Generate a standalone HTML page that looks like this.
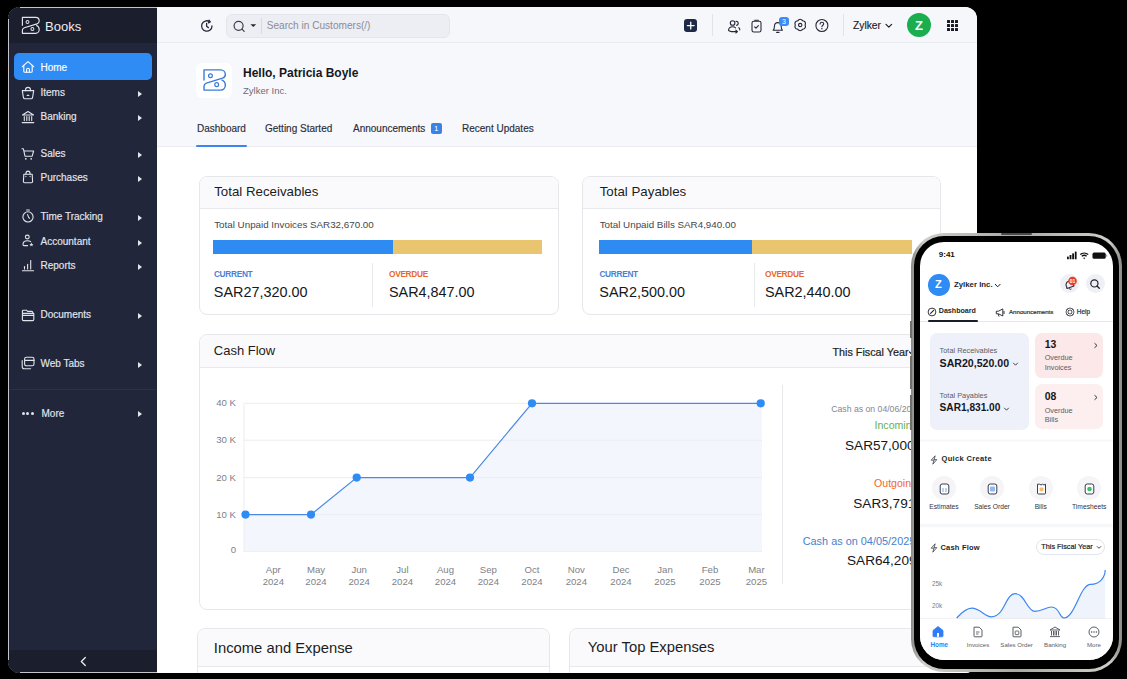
<!DOCTYPE html>
<html><head><meta charset="utf-8"><style>*{margin:0;padding:0;box-sizing:border-box}
html,body{width:1127px;height:679px;background:#000;overflow:hidden;font-family:"Liberation Sans",sans-serif;position:relative}
.a{position:absolute;white-space:nowrap}
#win{position:absolute;left:0;top:0;width:1127px;height:679px;clip-path:inset(7px 150px 6px 8px round 12px);background:#fff}
.arr{position:absolute;left:138px;width:0;height:0;border-top:3.5px solid transparent;border-bottom:3.5px solid transparent;border-left:4px solid #e4e6ee}
.card{position:absolute;border:1px solid #e6e7eb;border-radius:8px;background:#fff;overflow:hidden}
.ch{position:absolute;left:0;top:0;right:0;background:#fafafc;border-bottom:1px solid #e9e9ed}
</style></head><body>
<div id="win">
<div class="a" style="left:8px;top:7px;width:149px;height:666px;background:#21263a"></div>
<div class="a" style="left:8px;top:7px;width:149px;height:36px;background:#1b1e2d"></div>
<div class="a" style="left:8px;top:650px;width:149px;height:23px;background:#1b1e2d"></div>
<div class="a" style="left:8px;top:389px;width:149px;height:1px;background:#2c3146"></div>
<div class="a" style="left:45px;top:20.30px;font-size:13px;line-height:13px;color:#eceef4;">Books</div>
<div class="a" style="left:14px;top:53px;width:138px;height:27px;background:#2f8cf4;border-radius:5px"></div>
<div class="a" style="left:40.5px;top:63.14px;font-size:10px;line-height:10px;color:#ffffff;-webkit-text-stroke:0.15px currentColor;">Home</div>
<div class="a" style="left:40.5px;top:87.94px;font-size:10px;line-height:10px;color:#e4e6ee;-webkit-text-stroke:0.15px currentColor;">Items</div>
<div class="arr" style="top:90.5px"></div>
<div class="a" style="left:40.5px;top:112.23px;font-size:10px;line-height:10px;color:#e4e6ee;-webkit-text-stroke:0.15px currentColor;">Banking</div>
<div class="arr" style="top:114.8px"></div>
<div class="a" style="left:40.5px;top:149.13px;font-size:10px;line-height:10px;color:#e4e6ee;-webkit-text-stroke:0.15px currentColor;">Sales</div>
<div class="arr" style="top:151.7px"></div>
<div class="a" style="left:40.5px;top:173.43px;font-size:10px;line-height:10px;color:#e4e6ee;-webkit-text-stroke:0.15px currentColor;">Purchases</div>
<div class="arr" style="top:176.0px"></div>
<div class="a" style="left:40.5px;top:212.33px;font-size:10px;line-height:10px;color:#e4e6ee;-webkit-text-stroke:0.15px currentColor;">Time Tracking</div>
<div class="arr" style="top:214.9px"></div>
<div class="a" style="left:40.5px;top:237.03px;font-size:10px;line-height:10px;color:#e4e6ee;-webkit-text-stroke:0.15px currentColor;">Accountant</div>
<div class="arr" style="top:239.6px"></div>
<div class="a" style="left:40.5px;top:261.34px;font-size:10px;line-height:10px;color:#e4e6ee;-webkit-text-stroke:0.15px currentColor;">Reports</div>
<div class="arr" style="top:263.9px"></div>
<div class="a" style="left:40.5px;top:310.44px;font-size:10px;line-height:10px;color:#e4e6ee;-webkit-text-stroke:0.15px currentColor;">Documents</div>
<div class="arr" style="top:313.0px"></div>
<div class="a" style="left:40.5px;top:359.44px;font-size:10px;line-height:10px;color:#e4e6ee;-webkit-text-stroke:0.15px currentColor;">Web Tabs</div>
<div class="arr" style="top:362.0px"></div>
<div class="a" style="left:41.5px;top:408.54px;font-size:10px;line-height:10px;color:#e4e6ee;-webkit-text-stroke:0.15px currentColor;">More</div>
<div class="arr" style="top:411.1px"></div>
<div class="a" style="left:157px;top:7px;width:820px;height:36px;background:#f6f7fb;border-bottom:1px solid #ebebef"></div>
<div class="a" style="left:157px;top:43px;width:820px;height:104px;background:#f7f8fc;border-bottom:1px solid #ececf0"></div>
<div class="a" style="left:226px;top:14px;width:224px;height:24px;background:#ededf4;border:1px solid #e4e4eb;border-radius:6px"></div>
<div class="a" style="left:261px;top:17.5px;width:1px;height:16px;background:#d9d9e0"></div>
<div class="a" style="left:266.7px;top:20.55px;font-size:10.1px;line-height:10.1px;color:#8a8c96;">Search in Customers(/)</div>
<div class="a" style="left:196px;top:63px;width:36px;height:35px;background:#fff;border-radius:6px"></div>
<div class="a" style="left:243px;top:66.54px;font-size:12px;line-height:12px;color:#16171c;font-weight:bold;">Hello, Patricia Boyle</div>
<div class="a" style="left:243px;top:85.76px;font-size:9.5px;line-height:9.5px;color:#6b6d76;">Zylker Inc.</div>
<div class="a" style="left:197px;top:124.23px;font-size:10px;line-height:10px;color:#2a2d3a;-webkit-text-stroke:0.15px currentColor;">Dashboard</div>
<div class="a" style="left:265px;top:124.23px;font-size:10px;line-height:10px;color:#2a2d3a;-webkit-text-stroke:0.15px currentColor;">Getting Started</div>
<div class="a" style="left:353px;top:124.23px;font-size:10px;line-height:10px;color:#2a2d3a;-webkit-text-stroke:0.15px currentColor;">Announcements</div>
<div class="a" style="left:462px;top:124.23px;font-size:10px;line-height:10px;color:#2a2d3a;-webkit-text-stroke:0.15px currentColor;">Recent Updates</div>
<div class="a" style="left:430.7px;top:123.4px;width:11px;height:11px;background:#3b82e6;border-radius:2px;color:#fff;font-size:8px;line-height:11px;text-align:center">1</div>
<div class="a" style="left:196px;top:144.5px;width:51px;height:2.2px;background:#3d84f0;border-radius:1px"></div>
<div class="card" style="left:198.5px;top:175.5px;width:360.5px;height:139px"><div class="ch" style="height:32px"></div></div>
<div class="a" style="left:214.2px;top:184.74px;font-size:13.3px;line-height:13.3px;color:#1c1d22;">Total Receivables</div>
<div class="a" style="left:214.2px;top:219.60px;font-size:9.8px;line-height:9.8px;color:#45474f;">Total Unpaid Invoices SAR32,670.00</div>
<div class="a" style="left:213.39999999999998px;top:240px;width:179.90000000000003px;height:14px;background:#2e8bf2"></div>
<div class="a" style="left:393.3px;top:240px;width:148.7px;height:14px;background:#e8c56e"></div>
<div class="a" style="left:371.5px;top:263px;width:1px;height:44px;background:#e8e9ed"></div>
<div class="a" style="left:213.89999999999998px;top:270.47px;font-size:8.3px;line-height:8.3px;color:#4a80d4;font-weight:bold;letter-spacing:-0.3px;">CURRENT</div>
<div class="a" style="left:389px;top:270.47px;font-size:8.3px;line-height:8.3px;color:#e8692c;font-weight:bold;letter-spacing:-0.3px;">OVERDUE</div>
<div class="a" style="left:213.79999999999998px;top:284.51px;font-size:14.4px;line-height:14.4px;color:#16171c;">SAR27,320.00</div>
<div class="a" style="left:389px;top:284.51px;font-size:14.4px;line-height:14.4px;color:#16171c;">SAR4,847.00</div>
<div class="card" style="left:581.5px;top:175.5px;width:359.5px;height:139px"><div class="ch" style="height:32px"></div></div>
<div class="a" style="left:599.7px;top:184.74px;font-size:13.3px;line-height:13.3px;color:#1c1d22;">Total Payables</div>
<div class="a" style="left:599.7px;top:219.60px;font-size:9.8px;line-height:9.8px;color:#45474f;">Total Unpaid Bills SAR4,940.00</div>
<div class="a" style="left:598.9000000000001px;top:240px;width:153.39999999999986px;height:14px;background:#2e8bf2"></div>
<div class="a" style="left:752.3px;top:240px;width:159.70000000000005px;height:14px;background:#e8c56e"></div>
<div class="a" style="left:754.3px;top:263px;width:1px;height:44px;background:#e8e9ed"></div>
<div class="a" style="left:599.4000000000001px;top:270.47px;font-size:8.3px;line-height:8.3px;color:#4a80d4;font-weight:bold;letter-spacing:-0.3px;">CURRENT</div>
<div class="a" style="left:765px;top:270.47px;font-size:8.3px;line-height:8.3px;color:#e8692c;font-weight:bold;letter-spacing:-0.3px;">OVERDUE</div>
<div class="a" style="left:599.3000000000001px;top:284.51px;font-size:14.4px;line-height:14.4px;color:#16171c;">SAR2,500.00</div>
<div class="a" style="left:765px;top:284.51px;font-size:14.4px;line-height:14.4px;color:#16171c;">SAR2,440.00</div>
<div class="card" style="left:198.5px;top:334px;width:742px;height:276px"><div class="ch" style="height:32.5px"></div></div>
<div class="a" style="left:213.8px;top:343.90px;font-size:13px;line-height:13px;color:#1c1d22;">Cash Flow</div>
<svg class="a" style="left:907.5px;top:350px" width="9" height="7" viewBox="0 0 9 7"><path d="M1.5,2 L4.5,5 L7.5,2" fill="none" stroke="#1c1d22" stroke-width="1.2" stroke-linecap="round"/></svg>
<div class="a" style="left:832.4px;top:347.46px;font-size:10.8px;line-height:10.8px;color:#1c1d22;-webkit-text-stroke:0.2px currentColor;">This Fiscal Year</div>
<svg class="a" style="left:0;top:0" width="1127" height="679" viewBox="0 0 1127 679">
<path d="M244,514.6 L245.5,514.6 L311,514.6 L356.7,477.6 L470,477.6 L532,403.3 L760.7,403.3 L762,403.3 L762,551.6 L244,551.6 Z" fill="#f3f6fd"/><line x1="244" y1="403.3" x2="762" y2="403.3" stroke="#ededf1" stroke-width="1"/><line x1="244" y1="440.2" x2="762" y2="440.2" stroke="#ededf1" stroke-width="1"/><line x1="244" y1="477.6" x2="762" y2="477.6" stroke="#ededf1" stroke-width="1"/><line x1="244" y1="514.6" x2="762" y2="514.6" stroke="#ededf1" stroke-width="1"/>
<line x1="244" y1="551.6" x2="762" y2="551.6" stroke="#eeeef2" stroke-width="1"/>
<line x1="244" y1="403" x2="244" y2="552" stroke="#ededf1" stroke-width="1"/>
<path d="M245.5,514.6 L311,514.6 L356.7,477.6 L470,477.6 L532,403.3 L760.7,403.3" fill="none" stroke="#4a8ae6" stroke-width="1.2"/><circle cx="245.5" cy="514.6" r="4.1" fill="#2f8cf4"/><circle cx="311" cy="514.6" r="4.1" fill="#2f8cf4"/><circle cx="356.7" cy="477.6" r="4.1" fill="#2f8cf4"/><circle cx="470" cy="477.6" r="4.1" fill="#2f8cf4"/><circle cx="532" cy="403.3" r="4.1" fill="#2f8cf4"/><circle cx="760.7" cy="403.3" r="4.1" fill="#2f8cf4"/>
<g font-family="Liberation Sans" font-size="9.6" fill="#7d7f88"><text x="273.3" y="572.6" text-anchor="middle">Apr</text><text x="273.3" y="584.8" text-anchor="middle">2024</text><text x="316" y="572.6" text-anchor="middle">May</text><text x="316" y="584.8" text-anchor="middle">2024</text><text x="359.2" y="572.6" text-anchor="middle">Jun</text><text x="359.2" y="584.8" text-anchor="middle">2024</text><text x="402.4" y="572.6" text-anchor="middle">Jul</text><text x="402.4" y="584.8" text-anchor="middle">2024</text><text x="445.5" y="572.6" text-anchor="middle">Aug</text><text x="445.5" y="584.8" text-anchor="middle">2024</text><text x="488.3" y="572.6" text-anchor="middle">Sep</text><text x="488.3" y="584.8" text-anchor="middle">2024</text><text x="532" y="572.6" text-anchor="middle">Oct</text><text x="532" y="584.8" text-anchor="middle">2024</text><text x="576.3" y="572.6" text-anchor="middle">Nov</text><text x="576.3" y="584.8" text-anchor="middle">2024</text><text x="621" y="572.6" text-anchor="middle">Dec</text><text x="621" y="584.8" text-anchor="middle">2024</text><text x="665" y="572.6" text-anchor="middle">Jan</text><text x="665" y="584.8" text-anchor="middle">2025</text><text x="710" y="572.6" text-anchor="middle">Feb</text><text x="710" y="584.8" text-anchor="middle">2025</text><text x="756.4" y="572.6" text-anchor="middle">Mar</text><text x="756.4" y="584.8" text-anchor="middle">2025</text><text x="236" y="406.4" text-anchor="end">40 K</text><text x="236" y="443.3" text-anchor="end">30 K</text><text x="236" y="480.7" text-anchor="end">20 K</text><text x="236" y="517.8" text-anchor="end">10 K</text><text x="236" y="552.6" text-anchor="end">0</text></g></svg>
<div class="a" style="left:782px;top:385px;width:1px;height:199px;background:#e8e9ed"></div>
<div class="a" style="left:831.2px;top:405.34px;font-size:8.7px;line-height:8.7px;color:#85878e;">Cash as on 04/06/2025</div>
<div class="a" style="left:874.5px;top:419.63px;font-size:10.6px;line-height:10.6px;color:#6bb04a;">Incoming</div>
<div class="a" style="left:845px;top:438.79px;font-size:13.6px;line-height:13.6px;color:#16171c;">SAR57,000.00</div>
<div class="a" style="left:874px;top:478.33px;font-size:10.6px;line-height:10.6px;color:#f0682e;">Outgoing</div>
<div class="a" style="left:853.3px;top:496.59px;font-size:13.6px;line-height:13.6px;color:#16171c;">SAR3,791.00</div>
<div class="a" style="left:802.7px;top:536.17px;font-size:10.9px;line-height:10.9px;color:#4a80cc;">Cash as on 04/05/2025</div>
<div class="a" style="left:847px;top:554.49px;font-size:13.6px;line-height:13.6px;color:#16171c;">SAR64,209.00</div>
<div class="card" style="left:197px;top:628px;width:353px;height:80px"><div class="ch" style="height:37.6px"></div></div>
<div class="a" style="left:213.8px;top:640.67px;font-size:14.8px;line-height:14.8px;color:#1c1d22;">Income and Expense</div>
<div class="card" style="left:569px;top:628px;width:400px;height:80px"><div class="ch" style="height:37.6px"></div></div>
<div class="a" style="left:587.8px;top:639.67px;font-size:14.8px;line-height:14.8px;color:#1c1d22;">Your Top Expenses</div>
<svg class="a" style="left:19px;top:14px;overflow:visible" width="24" height="24" viewBox="0 0 24 24" ><path d="M3.4,11.8 V3.4 H16.6 C18.6,3.4 20.2,5 20.2,7 C20.2,8.4 19.4,9.4 18,9.9 L5.3,13.8 C4.2,14.2 3.4,15 3.4,16.2 V19.3 H16.6 C18.6,19.3 20.2,17.6 20.2,15.5 C20.2,13.3 18.8,11.8 17.2,11.2" fill="none" stroke="#e2e4ec" stroke-width="1.15" stroke-linejoin="round"/><circle cx="8.5" cy="8" r="1.45" fill="none" stroke="#e2e4ec" stroke-width="1.05"/><circle cx="13.4" cy="15" r="1.45" fill="none" stroke="#e2e4ec" stroke-width="1.05"/></svg>
<svg class="a" style="left:0;top:0" width="1127" height="679"><g transform="translate(199.68,65.58) scale(1.27)"><path d="M3.4,11.8 V3.4 H16.6 C18.6,3.4 20.2,5 20.2,7 C20.2,8.4 19.4,9.4 18,9.9 L5.3,13.8 C4.2,14.2 3.4,15 3.4,16.2 V19.3 H16.6 C18.6,19.3 20.2,17.6 20.2,15.5 C20.2,13.3 18.8,11.8 17.2,11.2" fill="none" stroke="#3b7bd6" stroke-width="1.1" stroke-linejoin="round"/><circle cx="8.5" cy="8" r="1.5" fill="none" stroke="#3b7bd6" stroke-width="0.95"/><circle cx="13.4" cy="15" r="1.5" fill="none" stroke="#3b7bd6" stroke-width="0.95"/></g></svg>
<svg class="a" style="left:21px;top:60px;overflow:visible" width="14" height="14" viewBox="0 0 14 14" ><g stroke="#fff" stroke-width="1.1" fill="none" stroke-linecap="round" stroke-linejoin="round"><path d="M1.3,6.6 L7,1.6 L12.7,6.6"/><path d="M2.8,5.4 V11.2 Q2.8,12.3 3.9,12.3 H10.1 Q11.2,12.3 11.2,11.2 V5.4"/><path d="M5.6,12.3 V9.6 Q5.6,8.2 7,8.2 Q8.4,8.2 8.4,9.6 V12.3"/></g></svg>
<svg class="a" style="left:21px;top:85.5px;overflow:visible" width="14" height="14" viewBox="0 0 14 14" ><g stroke="#e2e4ec" stroke-width="1.1" fill="none" stroke-linecap="round" stroke-linejoin="round"><path d="M4.6,4.6 V3.6 Q4.6,1.4 7,1.4 Q9.4,1.4 9.4,3.6 V4.6"/><path d="M1.3,4.6 H12.7 L11.6,11.4 Q11.4,12.8 10,12.8 H4 Q2.6,12.8 2.4,11.4 Z"/><path d="M6.2,9.4 H7.8"/></g></svg>
<svg class="a" style="left:21px;top:110px;overflow:visible" width="14" height="14" viewBox="0 0 14 14" ><g stroke="#e2e4ec" stroke-width="1.1" fill="none" stroke-linecap="round" stroke-linejoin="round"><path d="M1.5,5 L7,1.5 L12.5,5 Z"/><path d="M3.3,6.6 V10.6 M5.8,6.6 V10.6 M8.2,6.6 V10.6 M10.7,6.6 V10.6"/><path d="M1.2,12.6 H12.8"/></g></svg>
<svg class="a" style="left:21px;top:146.5px;overflow:visible" width="14" height="14" viewBox="0 0 14 14" ><g stroke="#e2e4ec" stroke-width="1.1" fill="none" stroke-linecap="round" stroke-linejoin="round"><path d="M1,1.8 H2.4 L4,9.2 H11.2 L12.6,4 H3"/></g><circle cx="4.8" cy="11.8" r="0.9" fill="#e2e4ec"/><circle cx="10.2" cy="11.8" r="0.9" fill="#e2e4ec"/></svg>
<svg class="a" style="left:21px;top:170px;overflow:visible" width="14" height="14" viewBox="0 0 14 14" ><g stroke="#e2e4ec" stroke-width="1.1" fill="none" stroke-linecap="round" stroke-linejoin="round"><path d="M5,4.3 V3.2 Q5,1.1 7,1.1 Q9,1.1 9,3.2 V4.3"/><path d="M2.8,4.3 H11.2 L11.6,11.6 Q11.6,12.8 10.4,12.8 H3.6 Q2.4,12.8 2.4,11.6 Z"/><path d="M4.9,6.2 L4.9,6.6 M9.1,6.2 V6.6"/></g></svg>
<svg class="a" style="left:21px;top:209px;overflow:visible" width="14" height="14" viewBox="0 0 14 14" ><g stroke="#e2e4ec" stroke-width="1.1" fill="none" stroke-linecap="round" stroke-linejoin="round"><circle cx="7" cy="7.9" r="5.1"/><path d="M5.6,1 H8.4"/><path d="M6.6,5.6 L7.6,8.4 L8.6,9.2"/></g></svg>
<svg class="a" style="left:21px;top:234px;overflow:visible" width="14" height="14" viewBox="0 0 14 14" ><g stroke="#e2e4ec" stroke-width="1.1" fill="none" stroke-linecap="round" stroke-linejoin="round"><circle cx="6.3" cy="3" r="1.9"/><path d="M9.6,7.6 Q8.6,6.8 6.3,6.8 Q2.2,6.8 2,10.4 Q2,11.6 3,11.6 H6.6"/></g><path d="M10.4,8.6 L11,10 L12.4,10.1 L11.3,11 L11.7,12.4 L10.4,11.6 L9.1,12.4 L9.5,11 L8.4,10.1 L9.8,10 Z" fill="#e2e4ec"/></svg>
<svg class="a" style="left:21px;top:258px;overflow:visible" width="14" height="14" viewBox="0 0 14 14" ><g stroke="#e2e4ec" stroke-width="1.1" fill="none" stroke-linecap="round" stroke-linejoin="round"><path d="M3.5,8.6 V11"/><path d="M6.6,6.2 V11"/><path d="M9.7,2.6 V11"/><path d="M1.4,12.8 H12.6"/></g></svg>
<svg class="a" style="left:21px;top:307.5px;overflow:visible" width="14" height="14" viewBox="0 0 14 14" ><g stroke="#e2e4ec" stroke-width="1.1" fill="none" stroke-linecap="round" stroke-linejoin="round"><path d="M1.4,4.6 V3.4 Q1.4,2.2 2.6,2.2 H5.4 L6.6,3.4 H10.6 Q11.8,3.4 11.8,4.6"/><path d="M1.4,5.4 H12.4 Q12.8,5.4 12.8,5.8 V11.4 Q12.8,12.6 11.6,12.6 H2.6 Q1.4,12.6 1.4,11.4 Z"/><path d="M1.6,7.4 H12.6"/></g></svg>
<svg class="a" style="left:21px;top:356px;overflow:visible" width="14" height="14" viewBox="0 0 14 14" ><g stroke="#e2e4ec" stroke-width="1.1" fill="none" stroke-linecap="round" stroke-linejoin="round"><rect x="3.6" y="1.2" width="9.4" height="8.6" rx="1.8"/><path d="M3.6,4.4 H13"/><path d="M1.2,4.6 V10.8 Q1.2,12.8 3.2,12.8 H9.6"/></g></svg>
<div class="a" style="left:22.05px;top:412.05px;width:3.1px;height:3.1px;border-radius:50%;background:#e2e4ec"></div>
<div class="a" style="left:26.349999999999998px;top:412.05px;width:3.1px;height:3.1px;border-radius:50%;background:#e2e4ec"></div>
<div class="a" style="left:30.650000000000002px;top:412.05px;width:3.1px;height:3.1px;border-radius:50%;background:#e2e4ec"></div>
<svg class="a" style="left:79px;top:656px;overflow:visible" width="9" height="11" viewBox="0 0 9 11" ><path d="M6.3,1.5 L2.3,5.5 L6.3,9.5" fill="none" stroke="#e8eaf0" stroke-width="1.3" stroke-linecap="round" stroke-linejoin="round"/></svg>
<svg class="a" style="left:200px;top:19px;overflow:visible" width="14" height="14" viewBox="0 0 14 14" ><g stroke="#262938" stroke-width="1.3" fill="none" stroke-linecap="round" stroke-linejoin="round"><path d="M12,7 A5.2,5.2 0 1 1 9.6,2.6"/><path d="M9,1.2 L10.2,2.9 L8.4,3.9"/><path d="M6.6,4.4 V7.3 L8.4,8.6"/></g></svg>
<svg class="a" style="left:232px;top:19px;overflow:visible" width="14" height="14" viewBox="0 0 14 14" ><g stroke="#3a3c48" stroke-width="1.2" fill="none" stroke-linecap="round"><circle cx="6.6" cy="6.8" r="4.5"/><path d="M10,10.2 L12.2,12.4"/></g></svg>
<svg class="a" style="left:249px;top:22px;overflow:visible" width="9" height="6" viewBox="0 0 9 6" ><path d="M1.4,2.2 L7.2,2.2 L4.3,5 Z" fill="#262938"/></svg>
<div class="a" style="left:683.8px;top:18.8px;width:13.5px;height:13.1px;border-radius:3px;background:#1e2a45"></div>
<svg class="a" style="left:683.8px;top:18.8px;overflow:visible" width="13.5" height="13.1" viewBox="0 0 13.5 13.1" ><path d="M6.75,3.2 V9.9 M3.4,6.55 H10.1" stroke="#fff" stroke-width="1.3" stroke-linecap="round"/></svg>
<div class="a" style="left:712.2px;top:14px;width:1px;height:22px;background:#e2e3e8"></div>
<div class="a" style="left:842.8px;top:14.3px;width:1px;height:22px;background:#e2e3e8"></div>
<svg class="a" style="left:727px;top:18.5px;overflow:visible" width="15" height="15" viewBox="0 0 15 15" ><g stroke="#262938" stroke-width="1.1" fill="none" stroke-linecap="round" stroke-linejoin="round"><circle cx="5.6" cy="4" r="2.3"/><path d="M9,2.2 Q11.3,2.4 11.2,4.6 Q11,6 9.6,6.4"/><path d="M1.6,11.2 Q1.8,7.8 5.6,7.8 Q7.6,7.8 8.6,8.8"/><path d="M1.6,11.2 Q2.2,12.6 6.4,12.6 H10"/><path d="M8.8,11.2 L10.4,12.6 L8.8,14"/><path d="M11.8,8.6 Q13,9.6 12.8,11"/></g></svg>
<svg class="a" style="left:749.5px;top:18.5px;overflow:visible" width="13" height="14" viewBox="0 0 13 14" ><g stroke="#262938" stroke-width="1.1" fill="none" stroke-linecap="round" stroke-linejoin="round"><rect x="2" y="2.2" width="9" height="10.8" rx="1.8"/><path d="M4.6,1.2 H8.4"/><path d="M4.6,7.8 L6,9.2 L8.4,6.6"/></g></svg>
<svg class="a" style="left:771px;top:20px;overflow:visible" width="14" height="14" viewBox="0 0 14 14" ><g stroke="#262938" stroke-width="1.1" fill="none" stroke-linecap="round" stroke-linejoin="round"><path d="M2.2,10.2 Q3.4,9 3.4,6.6 Q3.4,2.6 6.8,2.6 Q10.2,2.6 10.2,6.6 Q10.2,9 11.4,10.2 Z"/><path d="M5.6,12.4 H8"/></g></svg>
<div class="a" style="left:779.3px;top:17px;width:9.3px;height:9.3px;border-radius:3px;background:#3d8af7;color:#fff;font-size:7px;line-height:9.3px;text-align:center">3</div>
<svg class="a" style="left:793.5px;top:19.2px;overflow:visible" width="13" height="13" viewBox="0 0 13 13" ><g stroke="#262938" stroke-width="1.15" fill="none" stroke-linejoin="round"><path d="M4.93,0.63 Q6.20,-0.10 7.47,0.63 Q8.47,2.07 10.21,2.22 Q11.48,2.95 11.48,4.41 Q10.74,6.00 11.48,7.59 Q11.48,9.05 10.21,9.78 Q8.47,9.93 7.47,11.37 Q6.20,12.10 4.93,11.37 Q3.93,9.93 2.19,9.78 Q0.92,9.05 0.92,7.59 Q1.66,6.00 0.92,4.41 Q0.92,2.95 2.19,2.22 Q3.93,2.07 4.93,0.63 Z"/><circle cx="6.2" cy="6" r="1.7"/></g></svg>
<svg class="a" style="left:814.5px;top:19px;overflow:visible" width="14" height="14" viewBox="0 0 14 14" ><g stroke="#262938" stroke-width="1.1" fill="none" stroke-linecap="round"><circle cx="6.9" cy="6.5" r="6"/><path d="M5.1,5 Q5.1,3.2 6.9,3.2 Q8.7,3.2 8.7,4.8 Q8.7,5.8 7.6,6.4 Q6.9,6.8 6.9,7.8"/></g><circle cx="6.9" cy="9.8" r="0.75" fill="#262938"/></svg>
<div class="a" style="left:853px;top:21.22px;font-size:10.25px;line-height:10.25px;color:#1f2029;-webkit-text-stroke:0.15px currentColor;">Zylker</div>
<svg class="a" style="left:884.5px;top:23px;overflow:visible" width="8" height="6" viewBox="0 0 8 6" ><path d="M1,1.4 L3.8,4.2 L6.6,1.4" fill="none" stroke="#1f2029" stroke-width="1.2" stroke-linecap="round" stroke-linejoin="round"/></svg>
<div class="a" style="left:907.2px;top:13.3px;width:24px;height:24px;border-radius:50%;background:#1aae4f"></div>
<div class="a" style="left:915px;top:18.90px;font-size:13px;line-height:13px;color:#fff;font-weight:bold;">Z</div>
<div class="a" style="left:947.40px;top:20.20px;width:2.7px;height:2.7px;border-radius:0.6px;background:#1a1c26"></div>
<div class="a" style="left:951.35px;top:20.20px;width:2.7px;height:2.7px;border-radius:0.6px;background:#1a1c26"></div>
<div class="a" style="left:955.30px;top:20.20px;width:2.7px;height:2.7px;border-radius:0.6px;background:#1a1c26"></div>
<div class="a" style="left:947.40px;top:24.15px;width:2.7px;height:2.7px;border-radius:0.6px;background:#1a1c26"></div>
<div class="a" style="left:951.35px;top:24.15px;width:2.7px;height:2.7px;border-radius:0.6px;background:#1a1c26"></div>
<div class="a" style="left:955.30px;top:24.15px;width:2.7px;height:2.7px;border-radius:0.6px;background:#1a1c26"></div>
<div class="a" style="left:947.40px;top:28.10px;width:2.7px;height:2.7px;border-radius:0.6px;background:#1a1c26"></div>
<div class="a" style="left:951.35px;top:28.10px;width:2.7px;height:2.7px;border-radius:0.6px;background:#1a1c26"></div>
<div class="a" style="left:955.30px;top:28.10px;width:2.7px;height:2.7px;border-radius:0.6px;background:#1a1c26"></div>
<div class="a" style="left:8px;top:19px;width:1px;height:641px;background:#c4c5ca"></div>
<div class="a" style="left:20px;top:7px;width:137px;height:1px;background:#c4c5ca"></div>
<div class="a" style="left:20px;top:672px;width:137px;height:1px;background:#c4c5ca"></div>
</div>
<div class="a" style="left:911px;top:233px;width:210.5px;height:439px;border-radius:33px;background:linear-gradient(90deg,#8a8a86,#cfcfca 6%,#a9a9a4 50%,#cfcfca 94%,#8a8a86)"></div>
<div class="a" style="left:914px;top:236px;width:204.5px;height:433px;border-radius:30px;background:#000"></div>
<div class="a" style="left:1001px;top:233.3px;width:31px;height:1.3px;background:#4a4a48;border-radius:1px"></div>
<div class="a" style="left:910px;top:320.5px;width:1.5px;height:17.5px;background:#6f6f6b"></div>
<div class="a" style="left:910px;top:356px;width:1.5px;height:33px;background:#6f6f6b"></div>
<div class="a" style="left:910px;top:395px;width:1.5px;height:35px;background:#6f6f6b"></div>
<div class="a" style="left:920px;top:242px;width:193px;height:417.5px;border-radius:24px;background:#fff"></div>
<div class="a" style="left:938.8px;top:250.93px;font-size:8px;line-height:8px;color:#111;font-weight:bold;">9:41</div>
<svg class="a" style="left:1066px;top:250px" width="42" height="11" viewBox="0 0 42 11">
<rect x="1" y="6.5" width="1.8" height="2.8" rx="0.4" fill="#111"/>
<rect x="3.6" y="5" width="1.8" height="4.3" rx="0.4" fill="#111"/>
<rect x="6.2" y="3.3" width="1.8" height="6" rx="0.4" fill="#111"/>
<rect x="8.8" y="1.5" width="1.8" height="7.8" rx="0.4" fill="#111"/>
<path d="M14.2,4.6 A6,6 0 0 1 22.2,4.6" fill="none" stroke="#111" stroke-width="1.3"/>
<path d="M15.8,6.3 A3.6,3.6 0 0 1 20.6,6.3" fill="none" stroke="#111" stroke-width="1.3"/>
<path d="M17.2,8 L18.2,9.2 L19.2,8 A1.5,1.5 0 0 0 17.2,8 Z" fill="#111"/>
<rect x="26.5" y="2.6" width="13.2" height="6.2" rx="1.6" fill="#111"/>
<rect x="40.2" y="4.6" width="1" height="2.2" rx="0.5" fill="#888"/>
</svg>
<div class="a" style="left:928px;top:274px;width:21.5px;height:21.5px;border-radius:50%;background:#2f8cf4"></div>
<div class="a" style="left:934.9px;top:279.29px;font-size:11px;line-height:11px;color:#fff;font-weight:bold;">Z</div>
<div class="a" style="left:954px;top:281.10px;font-size:7.8px;line-height:7.8px;color:#1d1f26;font-weight:bold;">Zylker Inc.</div>
<svg class="a" style="left:994px;top:282px" width="8" height="7" viewBox="0 0 8 7"><path d="M1,2 L3.7,4.8 L6.4,2" fill="none" stroke="#222" stroke-width="1"/></svg>
<div class="a" style="left:1060px;top:274px;width:19px;height:19px;border-radius:50%;background:#eef0f5"></div>
<div class="a" style="left:1085.5px;top:274px;width:19px;height:19px;border-radius:50%;background:#eef0f5"></div>
<svg class="a" style="left:1062px;top:276px" width="16" height="15" viewBox="0 0 16 15">
<path d="M4.5,10.5 C3.5,9 4,6.5 6,5.5 C8,4.5 10,5.5 10.8,7.3 L12,10 L5,12.5 Z" fill="none" stroke="#2a2c34" stroke-width="1.1" stroke-linejoin="round"/>
<path d="M7,12.2 C7.3,13.3 8.5,13.6 9.4,13" fill="none" stroke="#2a2c34" stroke-width="1"/>
<circle cx="10.5" cy="5" r="4.3" fill="#ea3b2a"/>
<text x="10.5" y="7" font-family="Liberation Sans" font-size="5" font-weight="bold" fill="#fff" text-anchor="middle">01</text>
</svg>
<svg class="a" style="left:1088px;top:276.5px" width="14" height="14" viewBox="0 0 14 14">
<circle cx="6.4" cy="6.4" r="3.6" fill="none" stroke="#1d1f26" stroke-width="1.2"/>
<path d="M9,9 L11.3,11.3" stroke="#1d1f26" stroke-width="1.3" stroke-linecap="round"/>
</svg>
<svg class="a" style="left:927px;top:306.5px" width="10" height="10" viewBox="0 0 10 10">
<circle cx="5" cy="5" r="3.9" fill="none" stroke="#1d1f26" stroke-width="0.9"/>
<path d="M3.6,6.4 L6.6,3.4" stroke="#1d1f26" stroke-width="1.1" stroke-linecap="round"/>
</svg>
<div class="a" style="left:938.8px;top:308.39px;font-size:7.1px;line-height:7.1px;color:#1d1f26;font-weight:bold;">Dashboard</div>
<svg class="a" style="left:995px;top:306.5px" width="11" height="11" viewBox="0 0 11 11">
<path d="M1.3,4.2 L1.3,6.8 L3.5,6.8 L7.8,9 L7.8,1.9 L3.5,4.2 Z" fill="none" stroke="#1d1f26" stroke-width="0.9" stroke-linejoin="round"/>
<path d="M3.2,7 L4,9.6" stroke="#1d1f26" stroke-width="0.9"/>
<path d="M9,4 L9,7" stroke="#1d1f26" stroke-width="0.9"/>
</svg>
<div class="a" style="left:1009px;top:308.99px;font-size:6.15px;line-height:6.15px;color:#2a2c34;-webkit-text-stroke:0.2px currentColor;">Announcements</div>
<svg class="a" style="left:1064.5px;top:306.8px" width="10" height="10" viewBox="0 0 10 10">
<circle cx="5" cy="5" r="4" fill="none" stroke="#2a2c34" stroke-width="0.8"/>
<circle cx="5" cy="5" r="2" fill="none" stroke="#2a2c34" stroke-width="0.8"/>
<path d="M2.2,2.2 L3.6,3.6 M7.8,2.2 L6.4,3.6 M2.2,7.8 L3.6,6.4 M7.8,7.8 L6.4,6.4" stroke="#2a2c34" stroke-width="0.7"/>
</svg>
<div class="a" style="left:1076.8px;top:308.78px;font-size:6.4px;line-height:6.4px;color:#2a2c34;-webkit-text-stroke:0.2px currentColor;">Help</div>
<div class="a" style="left:920px;top:320.8px;width:193px;height:1px;background:#e4e7ee"></div>
<div class="a" style="left:928px;top:320px;width:50px;height:2px;background:#1a1c2a;border-radius:1px"></div>
<div class="a" style="left:930px;top:333px;width:99px;height:96.5px;border-radius:7px;background:#eef1fa"></div>
<div class="a" style="left:939.6px;top:346.68px;font-size:7.35px;line-height:7.35px;color:#5a5d66;">Total Receivables</div>
<div class="a" style="left:939.6px;top:358.23px;font-size:10.6px;line-height:10.6px;color:#16171c;font-weight:bold;">SAR20,520.00</div>
<svg class="a" style="left:1011.5px;top:361px" width="7" height="6" viewBox="0 0 7 6"><path d="M1.2,1.8 L3.5,4.2 L5.8,1.8" fill="none" stroke="#333" stroke-width="0.9"/></svg>
<div class="a" style="left:939.6px;top:391.78px;font-size:7.35px;line-height:7.35px;color:#5a5d66;">Total Payables</div>
<div class="a" style="left:939.6px;top:403.31px;font-size:10.15px;line-height:10.15px;color:#16171c;font-weight:bold;">SAR1,831.00</div>
<svg class="a" style="left:1003px;top:405.5px" width="7" height="6" viewBox="0 0 7 6"><path d="M1.2,1.8 L3.5,4.2 L5.8,1.8" fill="none" stroke="#333" stroke-width="0.9"/></svg>
<div class="a" style="left:1035.4px;top:332.8px;width:67.6px;height:45.2px;border-radius:7px;background:#fce8e9"></div>
<div class="a" style="left:1035.4px;top:384.2px;width:67.6px;height:44.8px;border-radius:7px;background:#fdeff0"></div>
<svg class="a" style="left:1093px;top:342.3px" width="6" height="7" viewBox="0 0 6 7"><path d="M1.5,1.2 L4,3.5 L1.5,5.8" fill="none" stroke="#333" stroke-width="1"/></svg>
<svg class="a" style="left:1093px;top:394.3px" width="6" height="7" viewBox="0 0 6 7"><path d="M1.5,1.2 L4,3.5 L1.5,5.8" fill="none" stroke="#333" stroke-width="1"/></svg>
<div class="a" style="left:1044.7px;top:339.70px;font-size:10.4px;line-height:10.4px;color:#16171c;font-weight:bold;">13</div>
<div class="a" style="left:1044.7px;top:354.32px;font-size:7.3px;line-height:7.3px;color:#5a5d66;">Overdue</div>
<div class="a" style="left:1044.7px;top:364.02px;font-size:7.3px;line-height:7.3px;color:#5a5d66;">Invoices</div>
<div class="a" style="left:1044.7px;top:392.10px;font-size:10.4px;line-height:10.4px;color:#16171c;font-weight:bold;">08</div>
<div class="a" style="left:1044.7px;top:406.62px;font-size:7.3px;line-height:7.3px;color:#5a5d66;">Overdue</div>
<div class="a" style="left:1044.7px;top:416.32px;font-size:7.3px;line-height:7.3px;color:#5a5d66;">Bills</div>
<div class="a" style="left:920px;top:439px;width:193px;height:3px;background:linear-gradient(#fff,#f5f6f9 50%,#fff)"></div>
<svg class="a" style="left:930px;top:454.5px" width="8" height="10" viewBox="0 0 8 10"><path d="M5.2,0.8 L1.2,5.2 L4,5.2 L2.8,9.2 L6.8,4.6 L4,4.6 Z" fill="none" stroke="#3a3c44" stroke-width="0.8" stroke-linejoin="round"/></svg>
<div class="a" style="left:941.5px;top:455.35px;font-size:7.5px;line-height:7.5px;color:#1d1f26;font-weight:bold;letter-spacing:0.35px;">Quick Create</div>
<div class="a" style="left:932px;top:476.3px;width:24px;height:24px;border-radius:50%;background:#f5f5f7"></div>
<div class="a" style="left:944px;top:503.93px;font-size:6.7px;line-height:6.7px;color:#33353d;transform:translateX(-50%);">Estimates</div>
<div class="a" style="left:980px;top:476.3px;width:24px;height:24px;border-radius:50%;background:#f5f5f7"></div>
<div class="a" style="left:992px;top:503.93px;font-size:6.7px;line-height:6.7px;color:#33353d;transform:translateX(-50%);">Sales Order</div>
<div class="a" style="left:1028.8px;top:476.3px;width:24px;height:24px;border-radius:50%;background:#f5f5f7"></div>
<div class="a" style="left:1040.8px;top:503.93px;font-size:6.7px;line-height:6.7px;color:#33353d;transform:translateX(-50%);">Bills</div>
<div class="a" style="left:1077.2px;top:476.3px;width:24px;height:24px;border-radius:50%;background:#f5f5f7"></div>
<div class="a" style="left:1089.2px;top:503.93px;font-size:6.7px;line-height:6.7px;color:#33353d;transform:translateX(-50%);">Timesheets</div>
<svg class="a" style="left:939px;top:482.5px" width="11" height="12" viewBox="0 0 11 12">
<rect x="1.2" y="1" width="8.6" height="10" rx="2" fill="#fff" stroke="#3a3c4a" stroke-width="1"/>
<path d="M3,6 L5,6 M6,6 L8,6 M3,8 L5,8 M6,8 L8,8" stroke="#5b9bf0" stroke-width="0.9"/></svg>
<svg class="a" style="left:987px;top:482.5px" width="11" height="12" viewBox="0 0 11 12">
<rect x="1.2" y="1" width="8.6" height="10" rx="2" fill="#fff" stroke="#3a3c4a" stroke-width="1"/>
<rect x="3" y="3.6" width="5" height="5" rx="0.8" fill="#8fbaf5"/></svg>
<svg class="a" style="left:1035.5px;top:482.5px" width="11" height="12" viewBox="0 0 11 12">
<path d="M1.5,1.2 L1.5,10 Q1.5,11 2.5,11 L8.5,11 Q9.5,11 9.5,10 L9.5,1.2 L8,2 L6.5,1.2 L5,2 L3.5,1.2 Z" fill="#fff" stroke="#3a3c4a" stroke-width="1" stroke-linejoin="round"/>
<rect x="3.6" y="4.5" width="3.8" height="3.8" rx="0.8" fill="#f5b971"/></svg>
<svg class="a" style="left:1084px;top:482.5px" width="11" height="12" viewBox="0 0 11 12">
<rect x="1.2" y="1" width="8.6" height="10" rx="2" fill="#fff" stroke="#3a3c4a" stroke-width="1"/>
<circle cx="5.5" cy="6" r="2.3" fill="#3cc070"/></svg>
<div class="a" style="left:920px;top:522.5px;width:193px;height:5px;background:linear-gradient(#fff,#f4f5f9 50%,#fff)"></div>
<svg class="a" style="left:929.5px;top:542.5px" width="8" height="10" viewBox="0 0 8 10"><path d="M5.2,0.8 L1.2,5.2 L4,5.2 L2.8,9.2 L6.8,4.6 L4,4.6 Z" fill="none" stroke="#3a3c44" stroke-width="0.8" stroke-linejoin="round"/></svg>
<div class="a" style="left:940.5px;top:544.15px;font-size:7.5px;line-height:7.5px;color:#1d1f26;font-weight:bold;letter-spacing:0.2px;">Cash Flow</div>
<div class="a" style="left:1035.8px;top:539px;width:68.8px;height:16.4px;border-radius:9px;border:1px solid #e1e5ef;background:#fff"></div>
<div class="a" style="left:1041.3px;top:543.42px;font-size:7.3px;line-height:7.3px;color:#1d1f26;-webkit-text-stroke:0.2px currentColor;">This Fiscal Year</div>
<svg class="a" style="left:1095.5px;top:545px" width="6" height="5" viewBox="0 0 6 5"><path d="M1,1.3 L3,3.3 L5,1.3" fill="none" stroke="#333" stroke-width="0.9"/></svg>
<div class="a" style="left:931.9px;top:580.88px;font-size:6.4px;line-height:6.4px;color:#7b7d86;">25k</div>
<div class="a" style="left:931.9px;top:603.38px;font-size:6.4px;line-height:6.4px;color:#7b7d86;">20k</div>
<svg class="a" style="left:0;top:0" width="1127" height="679" viewBox="0 0 1127 679">
<path d="M956.7,618 C963,611 967,608.2 971.8,608.2 C980,608.2 985,616.8 991.3,616.8 C1005,616.8 1005,593.7 1015.3,593.7 C1025,593.7 1027,611.4 1034.8,611.4 C1042,611.4 1046,607 1051.6,607 C1060,607 1059,618 1064,618 C1075,618 1080,584.3 1090.7,584.3 C1100,584.3 1105.2,577 1105.2,570.1 L1105.2,618.5 L956.7,618.5 Z" fill="#eff4fc"/>
<path d="M956.7,618 C963,611 967,608.2 971.8,608.2 C980,608.2 985,616.8 991.3,616.8 C1005,616.8 1005,593.7 1015.3,593.7 C1025,593.7 1027,611.4 1034.8,611.4 C1042,611.4 1046,607 1051.6,607 C1060,607 1059,618 1064,618 C1075,618 1080,584.3 1090.7,584.3 C1100,584.3 1105.2,577 1105.2,570.1" fill="none" stroke="#3b86f0" stroke-width="1.2"/></svg>
<div class="a" style="left:920px;top:618.5px;width:193px;height:41px;background:#fff;border-radius:0 0 24px 24px;box-shadow:0 -0.5px 1.5px rgba(0,0,0,0.06)"></div>
<svg class="a" style="left:931px;top:625px" width="14" height="13" viewBox="0 0 14 13">
<path d="M2,5.5 L7,1.5 L12,5.5 L12,11 Q12,11.8 11.2,11.8 L2.8,11.8 Q2,11.8 2,11 Z" fill="#2f7cf6" stroke="#2f7cf6" stroke-width="0.8" stroke-linejoin="round"/>
<rect x="6" y="8" width="2" height="3.8" fill="#fff"/></svg>
<svg class="a" style="left:972px;top:626px" width="12" height="12" viewBox="0 0 12 12">
<path d="M2,1.2 L7.2,1.2 L10,4 L10,10 Q10,10.8 9.2,10.8 L2.8,10.8 Q2,10.8 2,10 Z" fill="none" stroke="#4a4d57" stroke-width="0.9" stroke-linejoin="round"/>
<path d="M4,6 L7.5,6 M4,8 L6.5,8" stroke="#4a4d57" stroke-width="0.8"/></svg>
<svg class="a" style="left:1010.5px;top:626px" width="12" height="12" viewBox="0 0 12 12">
<path d="M2,1.2 L7.2,1.2 L10,4 L10,10 Q10,10.8 9.2,10.8 L2.8,10.8 Q2,10.8 2,10 Z" fill="none" stroke="#4a4d57" stroke-width="0.9" stroke-linejoin="round"/>
<rect x="4.2" y="5" width="3.6" height="3.6" rx="0.6" fill="none" stroke="#4a4d57" stroke-width="0.8"/></svg>
<svg class="a" style="left:1049px;top:626px" width="12" height="12" viewBox="0 0 12 12">
<path d="M1,4 L6,1 L11,4 Z" fill="none" stroke="#4a4d57" stroke-width="0.9" stroke-linejoin="round"/>
<path d="M2.5,5 L2.5,9.5 M4.5,5 L4.5,9.5 M6,5 L6,9.5 M7.5,5 L7.5,9.5 M9.5,5 L9.5,9.5 M1,10.6 L11,10.6" stroke="#4a4d57" stroke-width="0.9"/></svg>
<svg class="a" style="left:1088px;top:625.8px" width="12" height="12" viewBox="0 0 12 12">
<circle cx="6" cy="6" r="5" fill="none" stroke="#4a4d57" stroke-width="0.9"/>
<circle cx="3.6" cy="6" r="0.75" fill="#4a4d57"/><circle cx="6" cy="6" r="0.75" fill="#4a4d57"/><circle cx="8.4" cy="6" r="0.75" fill="#4a4d57"/></svg>
<div class="a" style="left:939.3px;top:641.67px;font-size:6.3px;line-height:6.3px;color:#2f7cf6;font-weight:bold;transform:translateX(-50%);">Home</div>
<div class="a" style="left:978px;top:641.84px;font-size:6.1px;line-height:6.1px;color:#5b5e68;transform:translateX(-50%);">Invoices</div>
<div class="a" style="left:1016.6px;top:641.84px;font-size:6.1px;line-height:6.1px;color:#5b5e68;transform:translateX(-50%);">Sales Order</div>
<div class="a" style="left:1055.1px;top:641.84px;font-size:6.1px;line-height:6.1px;color:#5b5e68;transform:translateX(-50%);">Banking</div>
<div class="a" style="left:1093.9px;top:641.84px;font-size:6.1px;line-height:6.1px;color:#5b5e68;transform:translateX(-50%);">More</div>
</body></html>
